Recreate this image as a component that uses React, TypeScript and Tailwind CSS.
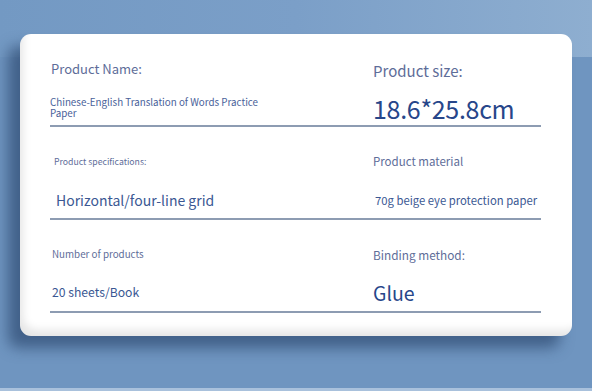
import React from 'react';

type Cell = {
  label: string
  labelClass: string
  value: React.ReactNode
  valueClass: string
}

// Noto Sans CJK metrics: leading-none puts the baseline at ~0.94em from line top
const rows: [Cell, Cell][] = [
  [
    {
      label: 'Product Name:',
      labelClass: 'pt-[28px] pl-[1px] text-[13px]',
      value: <>Chinese-English Translation of Words Practice<br />Paper</>,
      valueClass: 'mt-[22px] text-[9.8px] leading-[10.5px] text-[#4a629a]',
    },
    {
      label: 'Product size:',
      labelClass: 'pt-[29px] text-[15px]',
      value: '18.6*25.8cm',
      valueClass: 'mt-[18px] text-[25px] text-[#27468a] tracking-[-0.3px]',
    },
  ],
  [
    {
      label: 'Product specifications:',
      labelClass: 'pt-[31px] pl-[4px] text-[8.7px]',
      value: 'Horizontal/four-line grid',
      valueClass: 'mt-[26px] pl-[6px] text-[14px] text-[#3b5893]',
    },
    {
      label: 'Product material',
      labelClass: 'pt-[29px] text-[11.5px]',
      value: '70g beige eye protection paper',
      valueClass: 'mt-[27px] pl-[2px] text-[11.3px] text-[#3b5893] whitespace-nowrap',
    },
  ],
  [
    {
      label: 'Number of products',
      labelClass: 'pt-[29.5px] pl-[2px] text-[9.8px]',
      value: '20 sheets/Book',
      valueClass: 'mt-[27px] pl-[2px] text-[12.2px] text-[#3b5893]',
    },
    {
      label: 'Binding method:',
      labelClass: 'pt-[29px] text-[11.8px]',
      value: 'Glue',
      valueClass: 'mt-[22px] text-[19.5px] text-[#27468a]',
    },
  ],
]

const App: React.FC = () => {
  return (
    <div
      className="w-[592px] h-[391px] overflow-hidden bg-[#7096c1] flex flex-col"
      style={{ fontFamily: '"Noto Sans CJK SC", "Noto Sans", sans-serif' }}
    >
      <div className="h-[57px] bg-gradient-to-r from-[#7399c3] via-[#7b9fc8] to-[#8eaed0]" />
      <div className="flex-1 bg-[#6f95c0] border-b-[3px] border-[#a9c1dc]" />

      {/* card */}
      <div className="absolute left-[20px] top-[34px] w-[552px] h-[302px] rounded-[11px] bg-white shadow-[-12px_12px_14px_rgba(35,62,100,0.6),inset_6px_-9px_8px_-3px_rgba(0,0,0,0.10)]">
        <div className="ml-[30px] w-[491px] flex flex-col">
          {rows.map((row, i) => (
            <div key={i} className="h-[93px] grid grid-cols-[323px_1fr] border-b-2 border-[#8d9cb2]">
              {row.map((cell, j) => (
                <div key={j} className="flex flex-col">
                  <div className={`${cell.labelClass} leading-none text-[#5e6d99]`}>{cell.label}</div>
                  <div className={`${cell.valueClass} ${cell.valueClass.includes('leading-') ? '' : 'leading-none'}`}>{cell.value}</div>
                </div>
              ))}
            </div>
          ))}
        </div>
      </div>
    </div>
  );
};

export default App;
